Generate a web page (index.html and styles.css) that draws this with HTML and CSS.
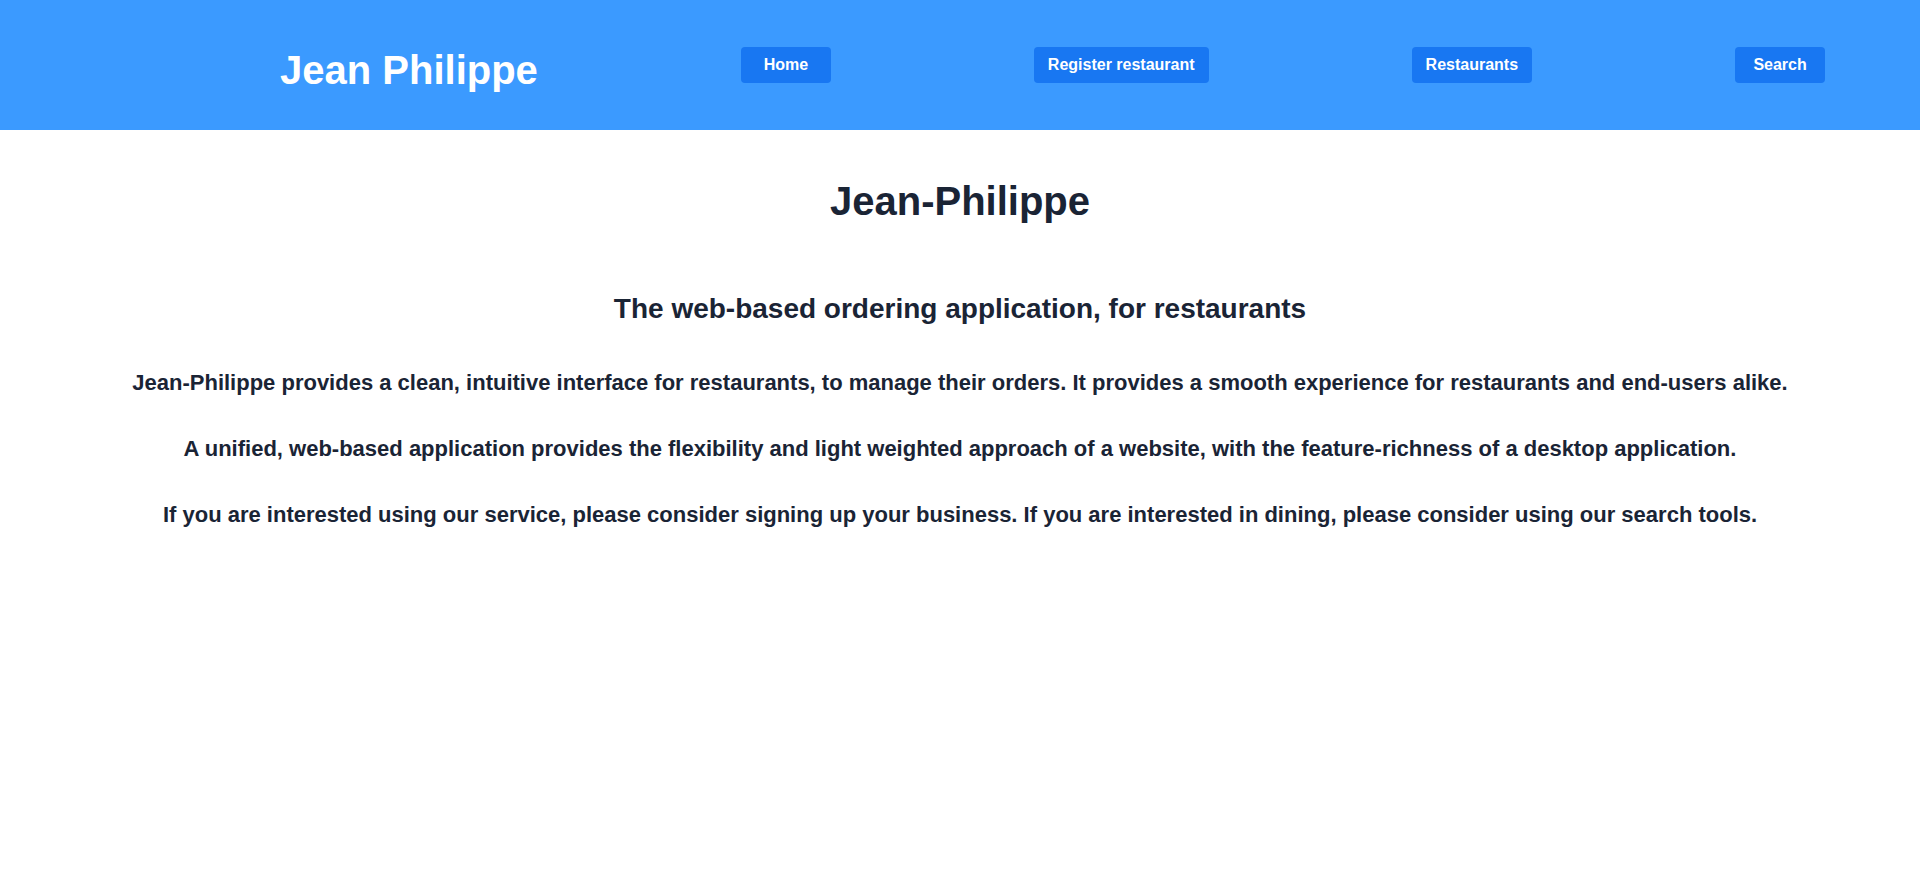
FILE: index.html
```html
<!DOCTYPE html>
<html lang="en">
<head>
<meta charset="utf-8">
<title>Jean Philippe</title>
<link rel="stylesheet" href="styles.css">
</head>
<body>
<header class="topbar">
  <div class="brand">Jean Philippe</div>
  <nav class="nav">
    <a class="nav-btn" href="#">Home</a>
    <a class="nav-btn" href="#">Register restaurant</a>
    <a class="nav-btn" href="#">Restaurants</a>
    <a class="nav-btn" href="#">Search</a>
  </nav>
</header>
<main class="content">
  <h1 class="title">Jean-Philippe</h1>
  <h2 class="subtitle">The web-based ordering application, for restaurants</h2>
  <p class="text">Jean-Philippe provides a clean, intuitive interface for restaurants, to manage their orders. It provides a smooth experience for restaurants and end-users alike.</p>
  <p class="text">A unified, web-based application provides the flexibility and light weighted approach of a website, with the feature-richness of a desktop application.</p>
  <p class="text">If you are interested using our service, please consider signing up your business. If you are interested in dining, please consider using our search tools.</p>
</main>
</body>
</html>
```

FILE: styles.css
```css
html, body {
  margin: 0;
  padding: 0;
  background: #ffffff;
}

body {
  font-family: "Liberation Sans", Arial, Helvetica, sans-serif;
  color: #1a2435;
}

.topbar {
  height: 130px;
  background: #3b9aff;
  display: flex;
  align-items: center;
  padding-left: 280px;
  box-sizing: border-box;
}

.brand {
  color: #ffffff;
  font-size: 40px;
  font-weight: 700;
  line-height: 46px;
  margin-top: 10px;
}

.nav {
  display: flex;
  align-items: center;
  gap: 203px;
  margin-left: 203px;
  margin-top: -1px;
}

.nav-btn {
  display: inline-flex;
  align-items: center;
  justify-content: center;
  height: 36px;
  min-width: 90px;
  padding: 0 14px;
  box-sizing: border-box;
  background: #1877f2;
  color: #ffffff;
  border-radius: 4px;
  font-size: 16px;
  font-weight: 700;
  text-decoration: none;
  white-space: nowrap;
}

.content {
  text-align: center;
  padding-top: 48px;
}

.title {
  margin: 0;
  font-size: 40px;
  line-height: 46px;
  font-weight: 700;
}

.subtitle {
  margin: 69px 0 0;
  font-size: 28px;
  line-height: 32px;
  font-weight: 700;
}

.text {
  margin: 45px 0 0;
  font-size: 22px;
  line-height: 25px;
  font-weight: 700;
}

.text + .text {
  margin-top: 41px;
}
```
